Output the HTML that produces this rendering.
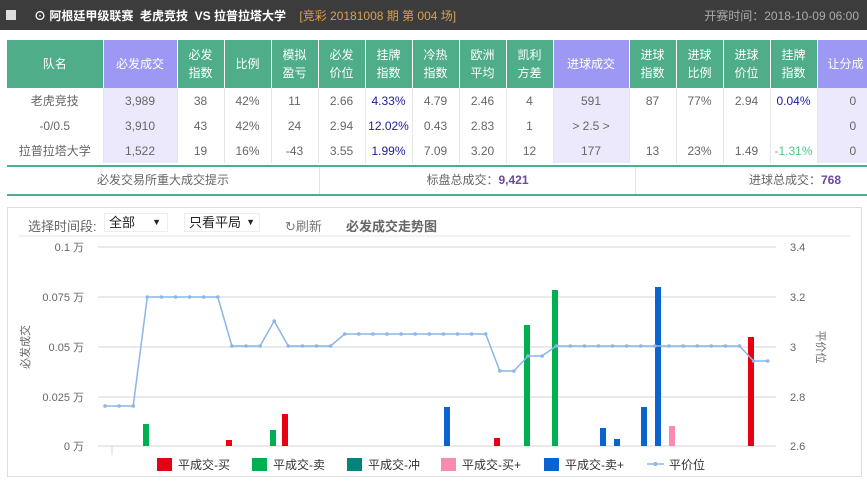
<!DOCTYPE html>
<html><head><meta charset="utf-8"><style>
*{margin:0;padding:0;box-sizing:border-box}
body{width:867px;height:484px;background:#fff;font-family:"Liberation Sans","Noto Sans CJK SC",sans-serif;font-size:12px;color:#555;position:relative;overflow:hidden}
.top{position:absolute;left:0;top:0;width:867px;height:30px;background:#3c3c3c;color:#fff}
.top .cb{position:absolute;left:6px;top:10px;width:10px;height:10px;background:#ddd}
.top .t{position:absolute;left:34px;top:7px;font-weight:bold;font-size:12px}
.top .o{color:#d9a050;font-weight:normal;margin-left:10px}
.top .r{position:absolute;right:8px;top:7px;color:#aaa}
table{position:absolute;left:7px;top:40px;border-collapse:collapse;table-layout:fixed;width:870px}
td,th{text-align:center;border-right:1px solid #fff;font-weight:normal}
th{background:#4fad8a;color:#fff;height:48px;line-height:18px;font-size:12px;border-right:1px solid #fff}
th.p{background:#9e98f5}
td{height:25px;color:#666;border-right:1px solid #e6e6e6}
td.p{background:#ece9fc}
.b{color:#1a1aa0}.g{color:#4c8}
.sum{position:absolute;left:7px;top:165px;width:860px;height:31px;border-top:2px solid #4fad8a;border-bottom:2px solid #4fad8a}
.sum div{position:absolute;top:0;height:27px;line-height:27px;text-align:center;color:#666}
.sum b{color:#6a4a9a}
.panel{position:absolute;left:7px;top:207px;width:855px;height:270px;border:1px solid #ddd}
.tb{position:absolute;top:216px;font-size:13px}
.sel{position:absolute;top:213px;height:19px;border:1px solid #eee;color:#222;font-size:13px;line-height:17px;padding-left:4px}
</style></head><body>
<div class="top"><div class="cb"></div><div class="t">⊙ 阿根廷甲级联赛&nbsp; 老虎竞技&nbsp; VS 拉普拉塔大学 <span class="o">[竞彩 20181008 期 第 004 场]</span></div><div class="r">开赛时间：2018-10-09 06:00</div></div>
<table>
<colgroup><col style="width:96px"><col style="width:74px"><col style="width:47px"><col style="width:47px"><col style="width:47px"><col style="width:47px"><col style="width:47px"><col style="width:47px"><col style="width:47px"><col style="width:47px"><col style="width:76px"><col style="width:47px"><col style="width:47px"><col style="width:47px"><col style="width:47px"><col style="width:60px"></colgroup>
<tr><th>队名</th><th class="p">必发成交</th><th>必发<br>指数</th><th>比例</th><th>模拟<br>盈亏</th><th>必发<br>价位</th><th>挂牌<br>指数</th><th>冷热<br>指数</th><th>欧洲<br>平均</th><th>凯利<br>方差</th><th class="p">进球成交</th><th>进球<br>指数</th><th>进球<br>比例</th><th>进球<br>价位</th><th>挂牌<br>指数</th><th class="p" style="text-align:left;padding-left:10px">让分成</th></tr>
<tr><td>老虎竞技</td><td class="p">3,989</td><td>38</td><td>42%</td><td>11</td><td>2.66</td><td class="b">4.33%</td><td>4.79</td><td>2.46</td><td>4</td><td class="p">591</td><td>87</td><td>77%</td><td>2.94</td><td class="b">0.04%</td><td class="p" style="text-align:left;padding-left:32px">0</td></tr>
<tr><td>-0/0.5</td><td class="p">3,910</td><td>43</td><td>42%</td><td>24</td><td>2.94</td><td class="b">12.02%</td><td>0.43</td><td>2.83</td><td>1</td><td class="p">&gt; 2.5 &gt;</td><td></td><td></td><td></td><td></td><td class="p" style="text-align:left;padding-left:32px">0</td></tr>
<tr><td>拉普拉塔大学</td><td class="p">1,522</td><td>19</td><td>16%</td><td>-43</td><td>3.55</td><td class="b">1.99%</td><td>7.09</td><td>3.20</td><td>12</td><td class="p">177</td><td>13</td><td>23%</td><td>1.49</td><td class="g">-1.31%</td><td class="p" style="text-align:left;padding-left:32px">0</td></tr>
</table>
<div class="sum"><div style="left:0;width:313px;border-right:1px solid #e3e3e3">必发交易所重大成交提示</div><div style="left:313px;width:316px;border-right:1px solid #e3e3e3">标盘总成交：<b>9,421</b></div><div style="left:629px;width:231px;text-align:right;padding-right:26px">进球总成交：<b>768</b></div></div>
<div class="panel"></div>
<div class="tb" style="left:28px;color:#666">选择时间段:</div>
<div class="sel" style="left:104px;width:64px">全部<span style="position:absolute;right:6px;font-size:9px">▼</span></div>
<div class="sel" style="left:184px;width:76px">只看平局<span style="position:absolute;right:4px;font-size:9px">▼</span></div>
<div class="tb" style="left:285px;color:#777">↻刷新</div>
<div class="tb" style="left:346px;color:#666;font-weight:bold">必发成交走势图</div>
<svg width="867" height="484" style="position:absolute;left:0;top:0" font-family="Liberation Sans,Noto Sans CJK SC,sans-serif" font-size="11" fill="#666">
<line x1="18" y1="236" x2="850" y2="236" stroke="#e5e5e5"/>
<g stroke="#d6d6d6"><line x1="98" y1="247" x2="776" y2="247"/><line x1="98" y1="297" x2="776" y2="297"/><line x1="98" y1="347" x2="776" y2="347"/><line x1="98" y1="397" x2="776" y2="397"/><line x1="98" y1="446" x2="776" y2="446"/><line x1="112" y1="446" x2="112" y2="455"/></g>
<g text-anchor="end"><text x="84" y="251">0.1 万</text><text x="84" y="301">0.075 万</text><text x="84" y="351">0.05 万</text><text x="84" y="401">0.025 万</text><text x="84" y="450">0 万</text></g>
<g><text x="790" y="251">3.4</text><text x="790" y="301">3.2</text><text x="790" y="351">3</text><text x="790" y="401">2.8</text><text x="790" y="450">2.6</text></g>
<text transform="translate(29,347) rotate(-90)" text-anchor="middle">必发成交</text>
<text transform="translate(817,347) rotate(90)" text-anchor="middle">平价位</text>
<g fill="#e60012"><rect x="226" y="440" width="6" height="6"/><rect x="282" y="414" width="6" height="32"/><rect x="494" y="438" width="6" height="8"/><rect x="748" y="337" width="6" height="109"/></g>
<g fill="#00b050"><rect x="143" y="424" width="6" height="22"/><rect x="270" y="430" width="6" height="16"/><rect x="524" y="325" width="6" height="121"/><rect x="552" y="290" width="6" height="156"/></g>
<g fill="#0a63d0"><rect x="444" y="407" width="6" height="39"/><rect x="600" y="428" width="6" height="18"/><rect x="614" y="439" width="6" height="7"/><rect x="641" y="407" width="6" height="39"/><rect x="655" y="287" width="6" height="159"/></g>
<rect x="669" y="426" width="6" height="20" fill="#f78cae"/>
<polyline fill="none" stroke="#8bb6e6" stroke-width="1.5" points="105,406 119.1,406 133.2,406 147.3,297 161.4,297 175.5,297 189.6,297 203.7,297 217.8,297 231.9,346 246,346 260.1,346 274.2,321 288.3,346 302.4,346 316.5,346 330.6,346 344.7,334 358.8,334 372.9,334 387,334 401.1,334 415.2,334 429.3,334 443.4,334 457.5,334 471.6,334 485.7,334 499.8,371 513.9,371 528,356 542.1,356 556.2,346 570.3,346 584.4,346 598.5,346 612.6,346 626.7,346 640.8,346 654.9,346 669,346 683.1,346 697.2,346 711.3,346 725.4,346 739.5,346 753.6,361 767.7,361"/>
<g fill="#8bb6e6"><circle cx="105" cy="406" r="1.8"/><circle cx="119.1" cy="406" r="1.8"/><circle cx="133.2" cy="406" r="1.8"/><circle cx="147.3" cy="297" r="1.8"/><circle cx="161.4" cy="297" r="1.8"/><circle cx="175.5" cy="297" r="1.8"/><circle cx="189.6" cy="297" r="1.8"/><circle cx="203.7" cy="297" r="1.8"/><circle cx="217.8" cy="297" r="1.8"/><circle cx="231.9" cy="346" r="1.8"/><circle cx="246" cy="346" r="1.8"/><circle cx="260.1" cy="346" r="1.8"/><circle cx="274.2" cy="321" r="1.8"/><circle cx="288.3" cy="346" r="1.8"/><circle cx="302.4" cy="346" r="1.8"/><circle cx="316.5" cy="346" r="1.8"/><circle cx="330.6" cy="346" r="1.8"/><circle cx="344.7" cy="334" r="1.8"/><circle cx="358.8" cy="334" r="1.8"/><circle cx="372.9" cy="334" r="1.8"/><circle cx="387" cy="334" r="1.8"/><circle cx="401.1" cy="334" r="1.8"/><circle cx="415.2" cy="334" r="1.8"/><circle cx="429.3" cy="334" r="1.8"/><circle cx="443.4" cy="334" r="1.8"/><circle cx="457.5" cy="334" r="1.8"/><circle cx="471.6" cy="334" r="1.8"/><circle cx="485.7" cy="334" r="1.8"/><circle cx="499.8" cy="371" r="1.8"/><circle cx="513.9" cy="371" r="1.8"/><circle cx="528" cy="356" r="1.8"/><circle cx="542.1" cy="356" r="1.8"/><circle cx="556.2" cy="346" r="1.8"/><circle cx="570.3" cy="346" r="1.8"/><circle cx="584.4" cy="346" r="1.8"/><circle cx="598.5" cy="346" r="1.8"/><circle cx="612.6" cy="346" r="1.8"/><circle cx="626.7" cy="346" r="1.8"/><circle cx="640.8" cy="346" r="1.8"/><circle cx="654.9" cy="346" r="1.8"/><circle cx="669" cy="346" r="1.8"/><circle cx="683.1" cy="346" r="1.8"/><circle cx="697.2" cy="346" r="1.8"/><circle cx="711.3" cy="346" r="1.8"/><circle cx="725.4" cy="346" r="1.8"/><circle cx="739.5" cy="346" r="1.8"/><circle cx="753.6" cy="361" r="1.8"/><circle cx="767.7" cy="361" r="1.8"/></g>
<g font-size="12" fill="#333">
<rect x="157" y="458" width="15" height="13" fill="#e60012"/><text x="178" y="469">平成交-买</text>
<rect x="252" y="458" width="15" height="13" fill="#00b050"/><text x="273" y="469">平成交-卖</text>
<rect x="347" y="458" width="15" height="13" fill="#00857a"/><text x="368" y="469">平成交-冲</text>
<rect x="441" y="458" width="15" height="13" fill="#f78cae"/><text x="462" y="469">平成交-买+</text>
<rect x="544" y="458" width="15" height="13" fill="#0a63d0"/><text x="565" y="469">平成交-卖+</text>
<line x1="647" y1="464" x2="664" y2="464" stroke="#8bb6e6" stroke-width="1.5"/><circle cx="655.5" cy="464" r="2" fill="#8bb6e6"/><text x="669" y="469">平价位</text>
</g>
</svg>
</body></html>
